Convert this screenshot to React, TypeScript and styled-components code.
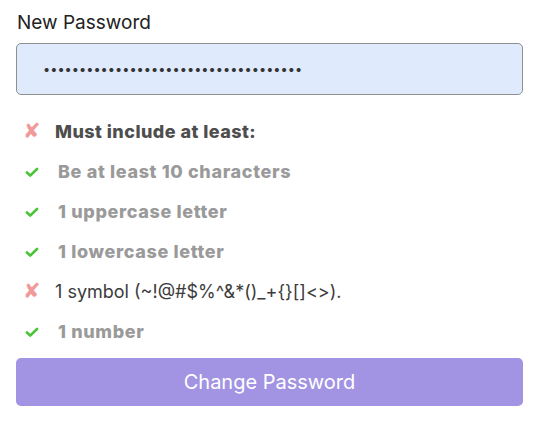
import styled, { createGlobalStyle } from "styled-components";

const GlobalStyle = createGlobalStyle`
  body {
    margin: 0;
    background: #ffffff;
    font-family: Inter, "Noto Sans", sans-serif;
  }
`;

const Form = styled.form`
  width: 507px;
  padding: 9px 0 0 16px;
  display: flex;
  flex-direction: column;
`;

const Label = styled.label`
  font-size: 19px;
  line-height: 28px;
  color: #222;
  margin-left: 1px;
`;

const PasswordInput = styled.input`
  margin-top: 6px;
  height: 52px;
  box-sizing: border-box;
  border: 1px solid #8f8f8f;
  border-radius: 5px;
  background: #dfeafc;
  padding: 0 26px;
  font-family: Inter, sans-serif;
  font-size: 12.8px;
  color: #333;
  outline: none;
`;

const Rules = styled.ul`
  list-style: none;
  margin: 16px 0 7px;
  padding: 0;
`;

const Rule = styled.li<{ $ok: boolean; $head?: boolean }>`
  height: 40px;
  display: flex;
  align-items: center;
  font-size: 18px;
  font-weight: ${(p) => (p.$ok || p.$head ? 800 : 400)};
  letter-spacing: ${(p) => (p.$ok ? "0.65px" : p.$head ? "0.45px" : "0")};
  color: ${(p) => (p.$head ? "#4e4e4e" : p.$ok ? "#9a9a9a" : "#3c3c3c")};
`;

const Mark = styled.span<{ $ok: boolean }>`
  width: ${(p) => (p.$ok ? "42px" : "39px")};
  padding-left: ${(p) => (p.$ok ? "8px" : "7px")};
  box-sizing: border-box;
  display: flex;
  align-items: center;
  font-family: "DejaVu Sans", sans-serif;
  font-size: 21px;
  font-weight: 400;
  color: ${(p) => (p.$ok ? "#4cc43a" : "#f09a9a")};
`;

const Check = () => (
  <svg width="14" height="11" viewBox="0 0 14 11" style={{ marginLeft: 1, marginTop: 2 }}>
    <polyline
      points="2,5.5 5.2,8.6 12,2"
      fill="none"
      stroke="#4cc43a"
      strokeWidth="2.7"
      strokeLinecap="round"
      strokeLinejoin="round"
    />
  </svg>
);

const Submit = styled.button`
  height: 48px;
  border: none;
  border-radius: 5px;
  background: #a294e2;
  color: #ffffff;
  font-family: Inter, sans-serif;
  font-size: 20px;
  cursor: pointer;
`;

const rules = [
  { text: "Must include at least:", ok: false, head: true },
  { text: "Be at least 10 characters", ok: true },
  { text: "1 uppercase letter", ok: true },
  { text: "1 lowercase letter", ok: true },
  { text: "1 symbol (~!@#$%^&*()_+{}[]<>).", ok: false },
  { text: "1 number", ok: true },
];

function App() {
  return (
    <>
      <GlobalStyle />
      <Form onSubmit={(e) => e.preventDefault()}>
        <Label htmlFor="pw">New Password</Label>
        <PasswordInput id="pw" type="password" readOnly value="Abcdefghijklmnopqrstuvwxyz1234567890" />
        <Rules>
          {rules.map((r) => (
            <Rule key={r.text} $ok={r.ok} $head={r.head}>
              <Mark $ok={r.ok}>{r.ok ? <Check /> : "✘"}</Mark>
              {r.text}
            </Rule>
          ))}
        </Rules>
        <Submit type="submit">Change Password</Submit>
      </Form>
    </>
  );
}

export default App;
